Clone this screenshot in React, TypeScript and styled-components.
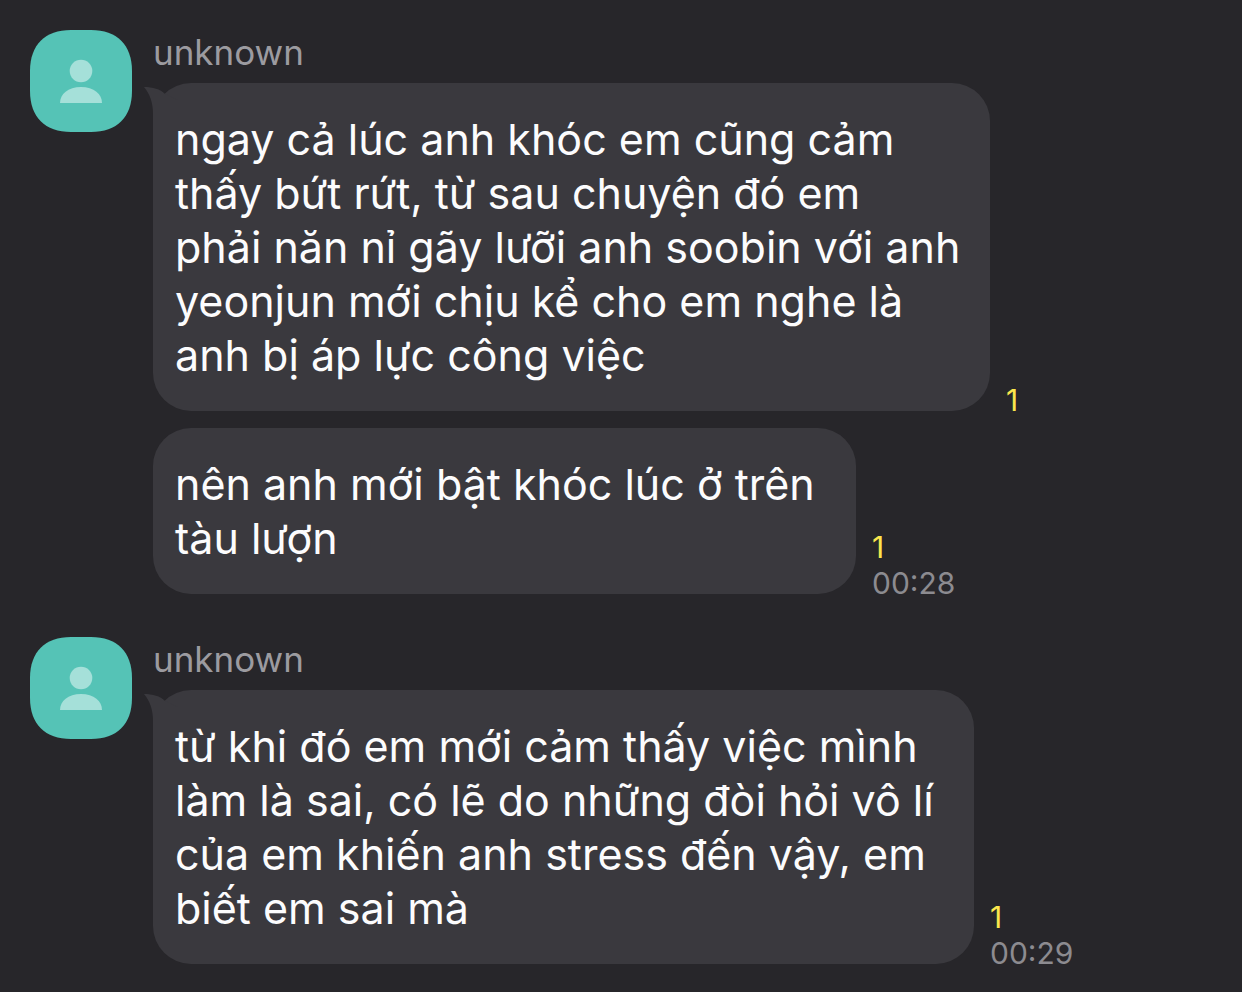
import React from "react";
import styled, { createGlobalStyle } from "styled-components";

const GlobalStyle = createGlobalStyle`
  * { box-sizing: border-box; }
  body {
    margin: 0;
    background: #27262a;
    font-family: Inter, "Noto Sans", sans-serif;
  }
`;

const Chat = styled.main`
  display: flex;
  flex-direction: column;
  gap: 43px;
  min-height: 100vh;
  padding: 30px 30px 28px;
  background: #27262a;
`;

const Group = styled.section`
  display: flex;
  align-items: flex-start;
  gap: 21px;
`;

const Avatar = styled.svg`
  flex: none;
  display: block;
  width: 102px;
  height: 102px;
`;

const Thread = styled.div`
  flex: 1;
  min-width: 0;
`;

const Sender = styled.h2`
  margin: 0;
  height: 53px;
  color: #9c9ba0;
  font-size: 35px;
  font-weight: 400;
  line-height: 44px;
`;

const Messages = styled.ul`
  display: flex;
  flex-direction: column;
  gap: 17px;
  margin: 0;
  padding: 0;
  list-style: none;
`;

const Message = styled.li`
  display: flex;
  align-items: flex-end;
  gap: 16px;
`;

const Bubble = styled.div<{ $width: number }>`
  position: relative;
  width: ${(p) => p.$width}px;
  padding: 29px 0 29px 22px;
  border-radius: 38px;
  background: #3a393e;
`;

const Tail = styled.svg`
  position: absolute;
  top: 3px;
  left: -9px;
  width: 34px;
  height: 40px;
`;

const Text = styled.p`
  position: relative;
  margin: 0;
  color: #fcfcfd;
  font-size: 43px;
  line-height: 54px;
  white-space: pre;
`;

const Meta = styled.div`
  display: flex;
  flex-direction: column;
  margin-bottom: -7px;
  font-size: 30px;
  line-height: 36px;
`;

const Unread = styled.span`
  color: #fbe64d;
`;

const Time = styled.time`
  color: #8c8b90;
`;

type Item = { lines: string[]; width: number; time?: string };

const groups: { sender: string; items: Item[] }[] = [
  {
    sender: "unknown",
    items: [
      {
        lines: [
          "ngay cả lúc anh khóc em cũng cảm",
          "thấy bứt rứt, từ sau chuyện đó em",
          "phải năn nỉ gãy lưỡi anh soobin với anh",
          "yeonjun mới chịu kể cho em nghe là",
          "anh bị áp lực công việc",
        ],
        width: 837,
      },
      {
        lines: ["nên anh mới bật khóc lúc ở trên", "tàu lượn"],
        width: 703,
        time: "00:28",
      },
    ],
  },
  {
    sender: "unknown",
    items: [
      {
        lines: [
          "từ khi đó em mới cảm thấy việc mình",
          "làm là sai, có lẽ do những đòi hỏi vô lí",
          "của em khiến anh stress đến vậy, em",
          "biết em sai mà",
        ],
        width: 821,
        time: "00:29",
      },
    ],
  },
];

const ProfilePicture = () => (
  <Avatar viewBox="0 0 102 102" aria-hidden="true">
    <path
      d="M41 0H61C87 0 102 15 102 41V61C102 87 87 102 61 102H41C15 102 0 87 0 61V41C0 15 15 0 41 0Z"
      fill="#55c3b6"
    />
    <circle cx="51" cy="41" r="11.3" fill="#a5e0d9" />
    <path d="M30 73C30 64 38 57 51 57C64 57 72 64 72 73Z" fill="#a5e0d9" />
  </Avatar>
);

export default function App() {
  return (
    <>
      <GlobalStyle />
      <Chat>
        {groups.map((group, g) => (
          <Group key={g}>
            <ProfilePicture />
            <Thread>
              <Sender>{group.sender}</Sender>
              <Messages>
                {group.items.map((item, i) => (
                  <Message key={i}>
                    <Bubble $width={item.width}>
                      {i === 0 && (
                        <Tail viewBox="0 0 34 40" aria-hidden="true">
                          <path
                            d="M0 1C9 1 16 3 21 8L34 14V40H9V28C9 17 6 8 0 1Z"
                            fill="#3a393e"
                          />
                        </Tail>
                      )}
                      <Text>{item.lines.join("\n")}</Text>
                    </Bubble>
                    <Meta>
                      <Unread>1</Unread>
                      {item.time && <Time>{item.time}</Time>}
                    </Meta>
                  </Message>
                ))}
              </Messages>
            </Thread>
          </Group>
        ))}
      </Chat>
    </>
  );
}
